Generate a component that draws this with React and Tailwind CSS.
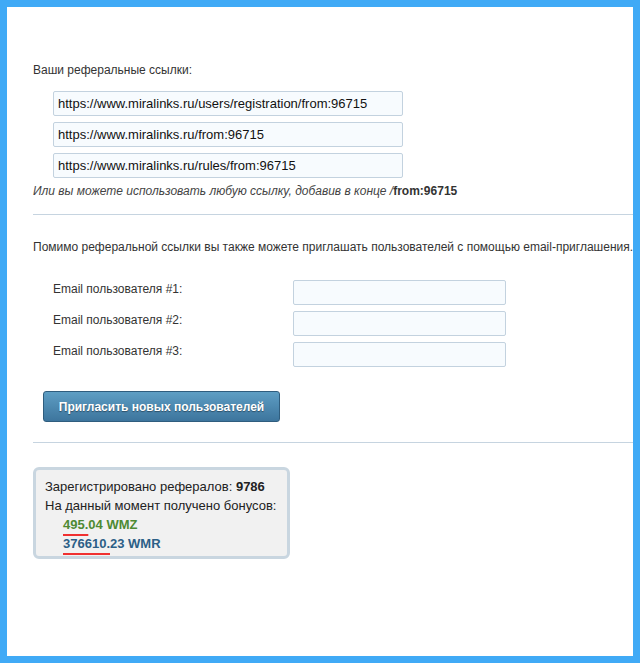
import React from 'react';

const links = [
  'https://www.miralinks.ru/users/registration/from:96715',
  'https://www.miralinks.ru/from:96715',
  'https://www.miralinks.ru/rules/from:96715',
];

function LinkField({ value }) {
  return (
    <input
      readOnly
      value={value}
      className="block w-[350px] h-[25px] px-[4px] border border-[#c3d2df] rounded-[2px] bg-[#f7fbfe] text-[13px] text-[#111] outline-none"
    />
  );
}

function EmailRow({ n }) {
  return (
    <div className="flex items-start h-[25px]">
      <label className="w-[240px] pt-[2px] text-[12px] leading-[15px] text-[#333]">
        Email пользователя #{n}:
      </label>
      <input className="w-[213px] h-[25px] border border-[#c3d2df] rounded-[2px] bg-[#f7fbfe] outline-none" />
    </div>
  );
}

export default function App() {
  return (
    <div
      className="w-[640px] h-[663px] border-[7px] border-[#40aaf6] bg-white overflow-hidden text-[#333]"
      style={{ fontFamily: '"Liberation Sans", Arial, sans-serif' }}
    >
      <div className="pl-[26px] pt-[56px]">
        <p className="text-[12px] leading-[15px]">Ваши реферальные ссылки:</p>

        {/* Links */}
        <div className="ml-[20px] mt-[13px] flex flex-col gap-[6px]">
          {links.map((l) => (
            <LinkField key={l} value={l} />
          ))}
        </div>
        <p className="mt-[6px] text-[12px] leading-[15px] italic text-[#444]">
          Или вы можете использовать любую ссылку, добавив в конце /<b className="not-italic font-bold text-[#333]">from:96715</b>
        </p>

        <hr className="mt-[15px] border-0 border-t border-[#c6d4e0]" />

        <p className="mt-[25px] text-[12px] leading-[15px] whitespace-nowrap">
          Помимо реферальной ссылки вы также можете приглашать пользователей с помощью email-приглашения.
        </p>

        {/* Email invites */}
        <div className="ml-[20px] mt-[25px] flex flex-col gap-[6px]">
          <EmailRow n={1} />
          <EmailRow n={2} />
          <EmailRow n={3} />
        </div>

        <button className="ml-[10px] mt-[24px] w-[237px] h-[31px] rounded-[3px] border border-[#2f5d7e] bg-gradient-to-b from-[#5e9ec4] to-[#3d759d] text-white text-[12px] font-bold [text-shadow:0_1px_1px_rgba(0,0,0,0.4)]">
          Пригласить новых пользователей
        </button>

        <hr className="mt-[20px] border-0 border-t border-[#c6d4e0]" />

        {/* Stats */}
        <div className="mt-[24px] w-[257px] h-[92px] rounded-[6px] border-[3px] border-[#c9d6e0] bg-[#f1f1f1] pl-[9px] pt-[7px] text-[13px] leading-[19px] text-[#222]">
          <div>
            Зарегистрировано рефералов: <b>9786</b>
          </div>
          <div>На данный момент получено бонусов:</div>
          <div className="pl-[18px] font-bold text-[#4e8a33]">
            <span className="underline decoration-[#f03030] decoration-2 underline-offset-[5px]">495.</span>04 WMZ
          </div>
          <div className="pl-[18px] font-bold text-[#2c5f87]">
            <span className="underline decoration-[#f03030] decoration-2 underline-offset-[5px]">376610.</span>23 WMR
          </div>
        </div>
      </div>
    </div>
  );
}
